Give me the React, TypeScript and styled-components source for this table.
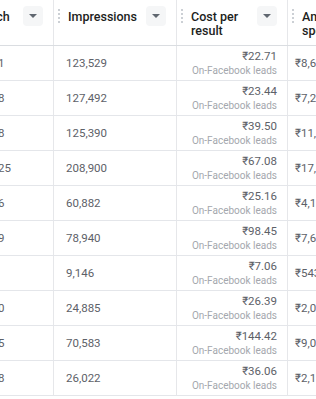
import React, { useLayoutEffect, useRef } from 'react';
import styled, { createGlobalStyle } from 'styled-components';

const GlobalStyle = createGlobalStyle`
  html, body {
    margin: 0;
    padding: 0;
    background: #ffffff;
    overflow: hidden;
  }
  body {
    font-family: Roboto, "Liberation Sans", Arial, sans-serif;
  }
`;

const Viewport = styled.div`
  width: 316px;
  height: 399px;
  overflow: hidden;
`;

const Table = styled.div`
  display: inline-flex;
  flex-direction: column;
`;

const HeaderRow = styled.div`
  display: flex;
  height: 46px;
  border-bottom: 1px solid #dadde1;
  box-sizing: border-box;
`;

const Row = styled.div`
  display: flex;
  height: 35px;
  border-bottom: 1px solid #e4e6ea;
  box-sizing: border-box;
`;

const HeaderCell = styled.div<{ $width: number }>`
  flex: 0 0 ${p => p.$width}px;
  box-sizing: border-box;
  display: flex;
  align-items: flex-start;
  padding: 0 10px 0 4px;
  border-right: 1px solid #e6e7ea;
`;

const DragHandle = styled.span`
  flex: 0 0 2px;
  height: 14px;
  margin-top: 9px;
  margin-right: 8px;
  background: repeating-linear-gradient(
    to bottom,
    #ccd0d5 0,
    #ccd0d5 2px,
    transparent 2px,
    transparent 4px
  );
`;

const HeaderLabel = styled.div`
  flex: 1;
  padding-top: 10px;
  font-size: 12.5px;
  line-height: 13.5px;
  font-weight: 500;
  color: #1c1e21;
`;

const SortButton = styled.button`
  flex: 0 0 20px;
  height: 20px;
  margin-top: 6px;
  margin-left: 6px;
  padding: 0;
  border: none;
  border-radius: 4px;
  background: #f5f6f7;
  display: flex;
  align-items: center;
  justify-content: center;
  cursor: pointer;

  &::after {
    content: '';
    width: 0;
    height: 0;
    border-left: 4px solid transparent;
    border-right: 4px solid transparent;
    border-top: 4px solid #606770;
  }
`;

const Cell = styled.div<{ $width: number; $align?: 'left' | 'right'; $pad?: number }>`
  flex: 0 0 ${p => p.$width}px;
  box-sizing: border-box;
  display: flex;
  flex-direction: column;
  justify-content: center;
  align-items: ${p => (p.$align === 'right' ? 'flex-end' : 'flex-start')};
  padding: 0 ${p => (p.$align === 'right' ? 10 : 0)}px 0 ${p => p.$pad ?? 12}px;
  border-right: 1px solid #e6e7ea;
  white-space: nowrap;
  overflow: hidden;
`;

const Value = styled.span`
  font-size: 11.5px;
  line-height: 15px;
  color: #5d6168;
`;

const SubLabel = styled.span`
  font-size: 10px;
  line-height: 13px;
  color: #a4a7ad;
`;

const columns = [
  { key: 'reach', label: 'Reach', width: 93 },
  { key: 'impressions', label: 'Impressions', width: 123 },
  { key: 'cost', label: 'Cost per result', width: 111 },
  { key: 'spent', label: 'Amount spent', width: 120 },
];

const rows = [
  { reach: '88,031', impressions: '123,529', cost: '₹22.71', spent: '₹8,656.27' },
  { reach: '91,208', impressions: '127,492', cost: '₹23.44', spent: '₹7,241.63' },
  { reach: '89,618', impressions: '125,390', cost: '₹39.50', spent: '₹11,139.08' },
  { reach: '152,125', impressions: '208,900', cost: '₹67.08', spent: '₹17,440.18' },
  { reach: '45,116', impressions: '60,882', cost: '₹25.16', spent: '₹4,126.74' },
  { reach: '57,479', impressions: '78,940', cost: '₹98.45', spent: '₹7,679.12' },
  { reach: '6,834', impressions: '9,146', cost: '₹7.06', spent: '₹543.80' },
  { reach: '18,760', impressions: '24,885', cost: '₹26.39', spent: '₹2,032.10' },
  { reach: '52,315', impressions: '70,583', cost: '₹144.42', spent: '₹9,098.46' },
  { reach: '19,108', impressions: '26,022', cost: '₹36.06', spent: '₹2,163.54' },
];

export default function App() {
  const scroller = useRef<HTMLDivElement>(null);

  // the table is scrolled sideways, so Reach is cut on the left
  useLayoutEffect(() => {
    if (scroller.current) scroller.current.scrollLeft = 39;
  }, []);

  return (
    <>
      <GlobalStyle />
      <Viewport ref={scroller}>
        <Table>
          <HeaderRow>
            {columns.map(col => (
              <HeaderCell key={col.key} $width={col.width}>
                <DragHandle />
                <HeaderLabel>{col.label}</HeaderLabel>
                <SortButton aria-label={`Sort by ${col.label}`} />
              </HeaderCell>
            ))}
          </HeaderRow>
          {rows.map((row, i) => (
            <Row key={i}>
              <Cell $width={93} $pad={9}>
                <Value>{row.reach}</Value>
              </Cell>
              <Cell $width={123}>
                <Value>{row.impressions}</Value>
              </Cell>
              <Cell $width={111} $align="right">
                <Value>{row.cost}</Value>
                <SubLabel>On-Facebook leads</SubLabel>
              </Cell>
              <Cell $width={120} $pad={7}>
                <Value>{row.spent}</Value>
              </Cell>
            </Row>
          ))}
        </Table>
      </Viewport>
    </>
  );
}
